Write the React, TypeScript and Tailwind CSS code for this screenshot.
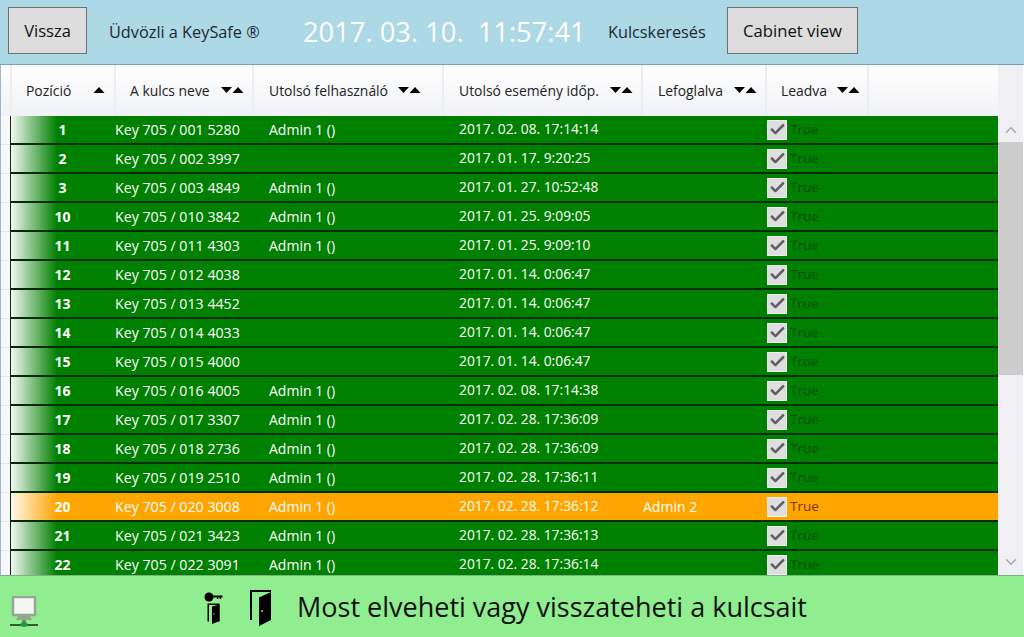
import { Check, ChevronDown, ChevronUp } from 'lucide-react';

type KeyRow = {
  pos: number;
  name: string;
  user?: string;
  date: string;
  reservedBy?: string;
};

const rows: KeyRow[] = [
  { pos: 1, name: 'Key 705 / 001 5280', user: 'Admin 1 ()', date: '2017. 02. 08. 17:14:14' },
  { pos: 2, name: 'Key 705 / 002 3997', date: '2017. 01. 17. 9:20:25' },
  { pos: 3, name: 'Key 705 / 003 4849', user: 'Admin 1 ()', date: '2017. 01. 27. 10:52:48' },
  { pos: 10, name: 'Key 705 / 010 3842', user: 'Admin 1 ()', date: '2017. 01. 25. 9:09:05' },
  { pos: 11, name: 'Key 705 / 011 4303', user: 'Admin 1 ()', date: '2017. 01. 25. 9:09:10' },
  { pos: 12, name: 'Key 705 / 012 4038', date: '2017. 01. 14. 0:06:47' },
  { pos: 13, name: 'Key 705 / 013 4452', date: '2017. 01. 14. 0:06:47' },
  { pos: 14, name: 'Key 705 / 014 4033', date: '2017. 01. 14. 0:06:47' },
  { pos: 15, name: 'Key 705 / 015 4000', date: '2017. 01. 14. 0:06:47' },
  { pos: 16, name: 'Key 705 / 016 4005', user: 'Admin 1 ()', date: '2017. 02. 08. 17:14:38' },
  { pos: 17, name: 'Key 705 / 017 3307', user: 'Admin 1 ()', date: '2017. 02. 28. 17:36:09' },
  { pos: 18, name: 'Key 705 / 018 2736', user: 'Admin 1 ()', date: '2017. 02. 28. 17:36:09' },
  { pos: 19, name: 'Key 705 / 019 2510', user: 'Admin 1 ()', date: '2017. 02. 28. 17:36:11' },
  { pos: 20, name: 'Key 705 / 020 3008', user: 'Admin 1 ()', date: '2017. 02. 28. 17:36:12', reservedBy: 'Admin 2' },
  { pos: 21, name: 'Key 705 / 021 3423', user: 'Admin 1 ()', date: '2017. 02. 28. 17:36:13' },
  { pos: 22, name: 'Key 705 / 022 3091', user: 'Admin 1 ()', date: '2017. 02. 28. 17:36:14' },
];

const SortArrows = ({ upOnly }: { upOnly?: boolean }) => (
  <svg width="24" height="8" viewBox="0 0 24 8" className="mb-[3px] shrink-0">
    {!upOnly && <path d="M1 1h11L6.500 7z" fill="#000" />}
    <path d="M12.500 7h11L18 1z" fill="#000" />
  </svg>
);

const HeaderCell = ({ label, className, upOnly }: { label: string; className: string; upOnly?: boolean }) => (
  <div className={`flex h-full items-center justify-between border-r-2 border-[#eceef1] pt-[2px] ${className}`}>
    <span>{label}</span>
    <SortArrows upOnly={upOnly} />
  </div>
);

const KeyIcon = () => (
  <svg width="19" height="32" viewBox="0 0 19 32">
    <circle cx="5" cy="5" r="4.500" fill="#000" />
    <path d="M8 3.500h10.500v2H17v1.500h-1.300V5.500h-1.400v1.500H13V5.500H8z" fill="#000" />
    <path d="M3.500 11.500h12v18h-1.500V13H5v16.500H3.500z" fill="#000" />
    <path d="M8 14.500l7.500-2V29L8 32z" fill="#000" />
    <circle cx="10" cy="22" r="0.700" fill="#90ee90" />
  </svg>
);

const DoorIcon = () => (
  <svg width="23" height="36" viewBox="0 0 23 36">
    <path d="M0 0h21v2H2v28H0z" fill="#000" />
    <path d="M9 7.500L21 2v28L9 36z" fill="#000" />
    <circle cx="12" cy="21" r="0.900" fill="#90ee90" />
  </svg>
);

const MonitorIcon = () => (
  <svg width="28" height="32" viewBox="0 0 28 32">
    <rect x="3" y="1" width="22" height="18" fill="#f4f6f4" stroke="#93a793" strokeWidth="2.500" />
    <path d="M8 20h12l2 4H6z" fill="#93a793" />
    <rect x="12" y="24" width="4" height="3" fill="#6d8a6d" />
    <rect x="0" y="28" width="28" height="2" fill="#2f5f2f" />
    <ellipse cx="14" cy="28.500" rx="3.500" ry="2.500" fill="#1f9a3a" />
  </svg>
);

const App = () => {
  return (
    <div className="flex h-[637px] w-[1024px] flex-col overflow-hidden bg-white font-['Open_Sans','Noto_Sans',sans-serif] text-[14px]">
      {/* Felső sáv */}
      <div className="flex h-[65px] shrink-0 items-center border-b border-[#7f9db9] bg-[#add8e6] pb-[3px] pl-[8px] text-[16.300px] text-[#1a2a33]">
        <button className="h-[47px] w-[79px] border border-[#707070] bg-[#dddddd] pt-[1px] text-[16.500px] text-[#111]">Vissza</button>
        <span className="ml-[22px] mt-[3px] w-[194px]">Üdvözli a KeySafe ®</span>
        <span className="mt-[3px] w-[305px] text-[27.300px] text-white">2017. 03. 10.&nbsp; 11:57:41</span>
        <span className="mt-[3px] w-[119px]">Kulcskeresés</span>
        <button className="h-[47px] w-[131px] border border-[#707070] bg-[#dddddd] pt-[1px] text-[16.700px] text-[#111]">Cabinet view</button>
      </div>

      {/* Táblázat */}
      <div className="flex min-h-0 flex-1 border-l border-[#9fb6cf]">
        <div className="flex w-[997px] shrink-0 flex-col">
          <div className="flex h-[51px] shrink-0 bg-gradient-to-b from-white to-[#f1f2f5] text-[13.900px] text-[#222]">
            <div className="w-[11px] border-r-2 border-[#eceef1]" />
            <HeaderCell label="Pozíció" upOnly className="w-[104px] pl-[14px] pr-[9px]" />
            <HeaderCell label="A kulcs neve" className="w-[138px] pl-[14px] pr-[8px]" />
            <HeaderCell label="Utolsó felhasználó" className="w-[190px] pl-[15px] pr-[21px]" />
            <HeaderCell label="Utolsó esemény időp." className="w-[199px] pl-[15px] pr-[8px]" />
            <HeaderCell label="Lefoglalva" className="w-[124px] pl-[15px] pr-[8px]" />
            <HeaderCell label="Leadva" className="w-[102px] pl-[14px] pr-[7px]" />
          </div>
          <div className="min-h-0 flex-1 overflow-hidden bg-[#f6f8fc]">
            {rows.map((row) => {
              const orange = row.pos === 20;
              return (
                <div key={row.pos} className="flex h-[29px] border-b border-[#e4e7ec] pl-[9px]">
                  <div
                    className={`flex h-[29px] w-[988px] shrink-0 items-center border-b-2 border-l border-[#022d02] text-[14px] text-white ${
                      orange ? 'bg-[#ffa500]' : 'bg-[#008000]'
                    }`}
                  >
                    <div
                      className={`flex h-full w-[104px] items-center justify-center pr-[1px] font-bold ${
                        orange
                          ? 'bg-[linear-gradient(to_right,#fff8ee_0px,#ffa500_46px)]'
                          : 'bg-[linear-gradient(to_right,#f2f8f2_0px,#008000_46px)]'
                      }`}
                    >
                      {row.pos}
                    </div>
                    <div className="w-[154px] truncate text-[14.200px]">{row.name}</div>
                    <div className="w-[190px] truncate">{row.user}</div>
                    <div className="w-[184px] truncate text-[13.800px]">{row.date}</div>
                    <div className="w-[124px] truncate">{row.reservedBy}</div>
                    <div className="flex items-center">
                      <span className="flex h-[20px] w-[20px] items-center justify-center border border-[#eeeeee] bg-[#dedede]">
                        <Check size={17} strokeWidth={3.500} color="#5f5f68" />
                      </span>
                      <span className={`ml-[3px] text-[13.500px] ${orange ? 'text-[#7a3300]' : 'text-[#014a01]'}`}>True</span>
                    </div>
                  </div>
                </div>
              );
            })}
          </div>
        </div>

        {/* Görgetősáv */}
        <div className="flex w-[25px] shrink-0 flex-col bg-[#f0f0f4]">
          <div className="flex h-[77px] shrink-0 items-end justify-center pb-[3px]">
            <ChevronUp size={18} color="#a8a8a8" strokeWidth={2} />
          </div>
          <div className="h-[233px] shrink-0 bg-[#cdcdcd]" />
          <div className="flex flex-1 items-end justify-center pb-[4px]">
            <ChevronDown size={18} color="#a8a8a8" strokeWidth={2} />
          </div>
        </div>
        <div className="w-px bg-white" />
      </div>

      {/* Alsó sáv */}
      <div className="flex h-[62px] shrink-0 items-center border-t border-[#7fb08a] bg-[#90ee90]">
        <div className="ml-[10px] mt-[10px]">
          <MonitorIcon />
        </div>
        <div className="ml-[166px] mt-[2px]">
          <KeyIcon />
        </div>
        <div className="ml-[27px] mt-[2px]">
          <DoorIcon />
        </div>
        <span className="ml-[24px] mt-[2px] text-[27px] text-[#111]">Most elveheti vagy visszateheti a kulcsait</span>
      </div>
    </div>
  );
};

export default App;
